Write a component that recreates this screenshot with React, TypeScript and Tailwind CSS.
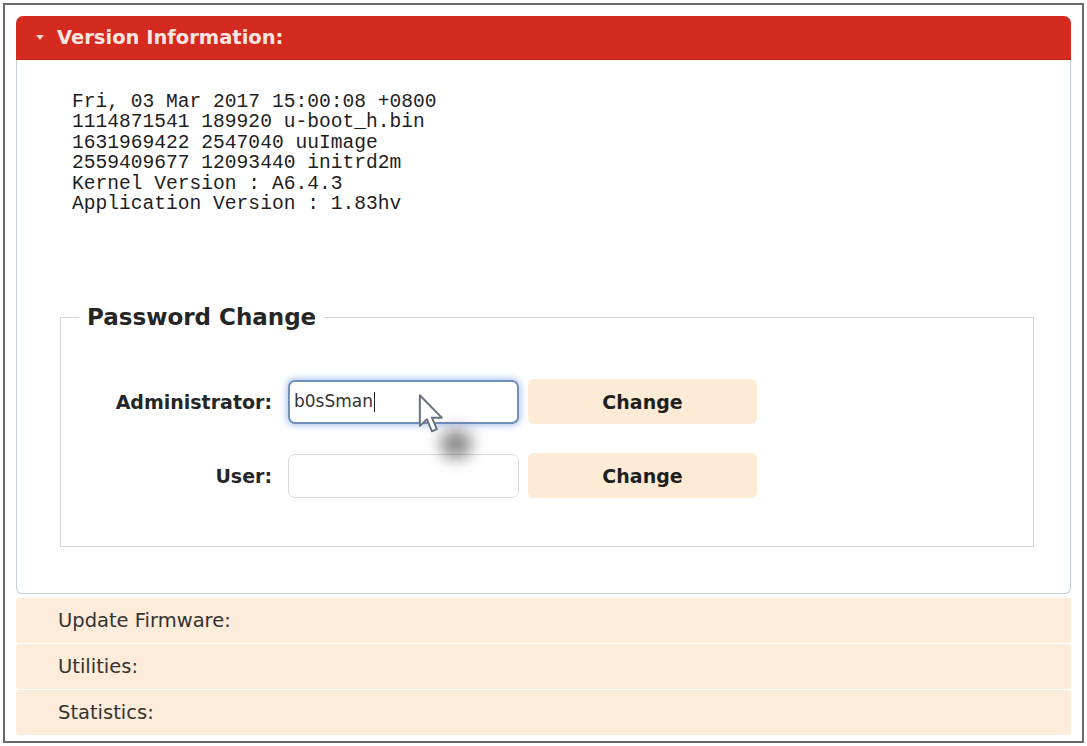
import { useState } from "react";

const versionLines = [
   "Fri, 03 Mar 2017 15:00:08 +0800",
   "1114871541 189920 u-boot_h.bin",
   "1631969422 2547040 uuImage",
   "2559409677 12093440 initrd2m",
   "Kernel Version : A6.4.3",
   "Application Version : 1.83hv",
];

const sections = ["Update Firmware:", "Utilities:", "Statistics:"];

function Cursor() {
   return (
      <div className="absolute left-[416px] top-[393px] pointer-events-none">
         {/* blurred drag shadow */}
         <div className="absolute left-[24px] top-[36px] w-[32px] h-[30px] rounded-full bg-[#6f6f6f] blur-[8px] opacity-80" />
         <svg width="34" height="46" viewBox="0 0 30 42" className="relative blur-[0.6px]">
            <path
               d="M3 2 L3 30 L9.5 24 L14 35 L18.5 33 L14 22.5 L23 22.5 Z"
               fill="#ffffff"
               stroke="#68717e"
               strokeWidth="1.8"
               strokeLinejoin="round"
            />
         </svg>
      </div>
   );
}

function PasswordRow({ label, value, focused }: { label: string, value: string, focused?: boolean }) {
   return (
      <div className="flex items-center">
         <label className="w-[209px] pr-[16px] text-right text-[19px] font-bold text-[#262626]">{label}</label>
         <div
            className={`w-[231px] h-[44px] rounded-[7px] bg-white flex items-center px-[4px] text-[17px] text-[#333] ${
               focused
                  ? "border-2 border-[#6f8fbf] shadow-[0_0_6px_2px_rgba(120,160,230,0.55)]"
                  : "border border-[#d8d8d8]"
            }`}
         >
            {value}
            {focused && <span className="inline-block w-px h-[20px] bg-[#222] ml-px" />}
         </div>
         <button className="ml-[9px] w-[229px] h-[45px] rounded-[6px] bg-[#fdebd5] text-[19px] font-bold text-[#1f1f1f]">
            Change
         </button>
      </div>
   );
}

export default function App() {
   const [admin] = useState("b0sSman");

   return (
      <div className="relative w-[1087px] h-[746px] bg-white p-[3px] font-['DejaVu_Sans',Verdana,sans-serif]">
         <div className="h-full border-2 border-[#6a6a6a] pt-[11px] px-[11px] pb-[8px] flex flex-col">
            {/* Version Information panel */}
            <div className="h-[44px] shrink-0 bg-[#d42a20] rounded-t-[7px] flex items-center pl-[19px] border-b border-[#b8231b]">
               <svg width="10" height="7" viewBox="0 0 10 7" className="mr-[12px]">
                  <path d="M1 1 L9 1 L5 6 Z" fill="#fbd6c8" />
               </svg>
               <span className="text-[19.5px] font-bold text-[#fde6e0]">Version Information:</span>
            </div>
            <div className="h-[534px] shrink-0 border-x border-b border-[#c6d0da] rounded-b-[6px] bg-white pt-[32px] flex flex-col">
               <pre className="pl-[55px] font-['Liberation_Mono','Courier_New',monospace] text-[19.6px] leading-[20.4px] text-[#1e1e1e]">
                  {versionLines.join("\n")}
               </pre>

               {/* Password Change */}
               <fieldset className="mt-[89px] ml-[43px] mr-[36px] border border-[#d6d6d6] pl-[18px] pr-[20px] pt-[48px] pb-[48px] flex flex-col gap-[29px]">
                  <legend className="px-[8px] text-[23px] font-bold text-[#262626] leading-[28px]">Password Change</legend>
                  <PasswordRow label="Administrator:" value={admin} focused />
                  <PasswordRow label="User:" value="" />
               </fieldset>
            </div>

            {/* Collapsed sections */}
            <div className="mt-[4px] flex flex-col gap-[1px]">
               {sections.map((s) => (
                  <div key={s} className="h-[45px] bg-[#fdecd9] rounded-[3px] flex items-center pl-[42px] text-[19.5px] text-[#333]">
                     {s}
                  </div>
               ))}
            </div>
         </div>

         <Cursor />
      </div>
   );
}
